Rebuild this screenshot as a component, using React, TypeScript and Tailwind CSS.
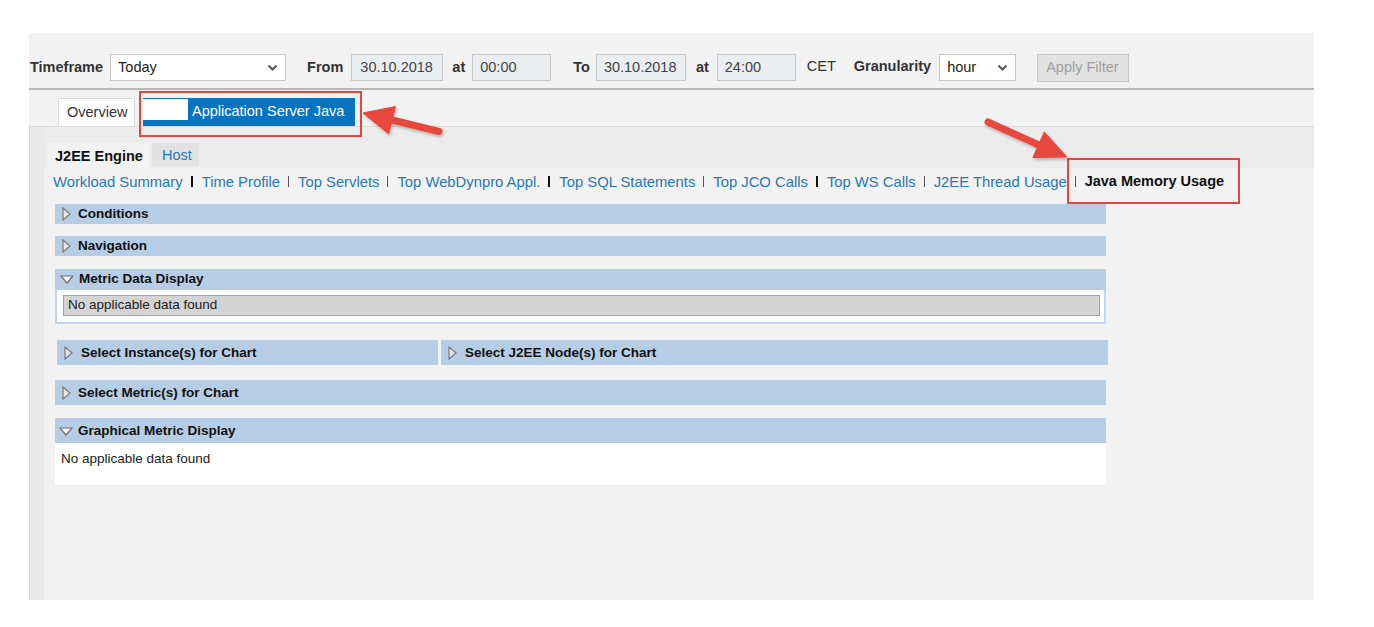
import React from "react";

const Chevron = () => (
  <svg width="11" height="8" viewBox="0 0 11 8">
    <path d="M1.5 1.5 L5.5 5.5 L9.5 1.5" stroke="#555" strokeWidth="2" fill="none" />
  </svg>
);

const TriRight = () => (
  <svg width="9" height="14" viewBox="0 0 9 14" className="shrink-0">
    <polygon points="1,1 8,7 1,13" fill="#e6e6e6" stroke="#7a7a7a" strokeWidth="1.2" />
  </svg>
);

const TriDown = () => (
  <svg width="14" height="9" viewBox="0 0 14 9" className="shrink-0">
    <polygon points="1,1 13,1 7,8" fill="#ffffff" stroke="#6e6e6e" strokeWidth="1.2" />
  </svg>
);

const links = [
  "Workload Summary",
  "Time Profile",
  "Top Servlets",
  "Top WebDynpro Appl.",
  "Top SQL Statements",
  "Top JCO Calls",
  "Top WS Calls",
  "J2EE Thread Usage",
];
const thick = [0, 3, 5];

export default function App() {
  return (
    <div className="relative w-[1374px] h-[627px] bg-white pt-[33px] pl-[29px] font-['Liberation_Sans',Arial,sans-serif] overflow-hidden">
      <div className="w-[1285px] h-[567px] bg-[#f2f2f2] flex flex-col">
        {/* Filter row */}
        <div className="h-[57px] shrink-0 flex items-start pt-[21px] pl-[1px] border-b-2 border-[#b8b8b8] text-[14.5px] text-[#333]">
          <span className="h-[27px] flex items-center font-bold">Timeframe</span>
          <div className="ml-[7px] w-[176px] h-[27px] bg-white border border-[#c6c6c6] flex items-center justify-between pl-[7px] pr-[7px] text-[#222]">
            <span>Today</span>
            <Chevron />
          </div>
          <span className="ml-[21px] h-[27px] flex items-center font-bold">From</span>
          <div className="ml-[8px] w-[92px] h-[27px] bg-[#ebeef1] border border-[#c8c8c8] flex items-center pl-[8px] text-[#444]">30.10.2018</div>
          <span className="ml-[9px] h-[27px] flex items-center font-bold">at</span>
          <div className="ml-[7px] w-[79px] h-[27px] bg-[#ebeef1] border border-[#c8c8c8] flex items-center pl-[7px] text-[#444]">00:00</div>
          <span className="ml-[22px] h-[27px] flex items-center font-bold">To</span>
          <div className="ml-[6px] w-[90px] h-[27px] bg-[#ebeef1] border border-[#c8c8c8] flex items-center pl-[7px] text-[#444]">30.10.2018</div>
          <span className="ml-[10px] h-[27px] flex items-center font-bold">at</span>
          <div className="ml-[8px] w-[79px] h-[27px] bg-[#ebeef1] border border-[#c8c8c8] flex items-center pl-[7px] text-[#444]">24:00</div>
          <span className="ml-[11px] h-[25px] flex items-center">CET</span>
          <span className="ml-[18px] h-[25px] flex items-center font-bold">Granularity</span>
          <div className="ml-[8px] w-[77px] h-[27px] bg-white border border-[#c6c6c6] flex items-center justify-between pl-[7px] pr-[7px] text-[#222]">
            <span>hour</span>
            <Chevron />
          </div>
          <div className="ml-[21px] w-[92px] h-[28px] bg-[#e2e2e2] border border-[#c6c6c6] flex items-center pl-[8px] text-[#a0a0a0]">Apply Filter</div>
        </div>

        {/* Tabs row */}
        <div className="h-[37px] shrink-0 flex items-start pt-[8px] pl-[29px] border-b border-[#dadada] text-[14.5px]">
          <div className="w-[77px] h-[28px] bg-white border border-b-0 border-[#dcdcdc] flex items-center pl-[8px] text-[#333]">Overview</div>
          <div className="ml-[8px] w-[212px] h-[28px] bg-[#0874c0] flex items-start">
            <div className="w-[45px] h-[21px] bg-white mt-[1px]" />
            <span className="pl-[4px] pt-[5px] text-white leading-[17px]">Application Server Java</span>
          </div>
        </div>

        {/* Body */}
        <div className="flex-1 flex">
          <div className="w-[15px] shrink-0 bg-[#e9e9e9] border-l border-[#cecece]" />
          <div className="flex-1 flex flex-col">
            {/* Sub tabs */}
            <div className="h-[41px] shrink-0 bg-[#ececec] flex items-start pt-[16px] pl-[3px] text-[14.5px]">
              <div className="w-[103px] h-[25px] bg-[#f2f2f2] flex items-center pt-[2px] pl-[8px] font-bold text-[#111]">J2EE Engine</div>
              <div className="ml-[2px] w-[47px] h-[23px] bg-[#e2e2e2] flex items-center pt-[2px] pl-[10px] text-[#2878b4]">Host</div>
            </div>

            {/* Links */}
            <div className="h-[27px] shrink-0 flex items-center pt-[1px] pl-[9px] text-[14.8px] text-[#2878b4]">
              {links.map((l, i) => (
                <React.Fragment key={l}>
                  <span>{l}</span>
                  <span
                    className={
                      thick.includes(i)
                        ? "ml-[8px] mr-[9px] w-[2px] h-[11px] bg-[#111] -mt-[2px]"
                        : "ml-[8px] mr-[9px] w-px h-[11px] bg-[#555] -mt-[2px]"
                    }
                  />
                </React.Fragment>
              ))}
              <span className="font-bold text-[#111] text-[14.5px]">Java Memory Usage</span>
            </div>

            {/* Panels */}
            <div className="pl-[11px] flex flex-col text-[13.5px] text-[#111]">
              <div className="mt-[9px] w-[1051px] h-[20px] bg-[#b7cde5] flex items-center pl-[7px] gap-[7px] font-bold">
                <TriRight />
                <span>Conditions</span>
              </div>
              <div className="mt-[12px] w-[1051px] h-[20px] bg-[#b7cde5] flex items-center pl-[7px] gap-[7px] font-bold">
                <TriRight />
                <span>Navigation</span>
              </div>
              <div className="mt-[13px] w-[1051px]">
                <div className="h-[21px] bg-[#b7cde5] flex items-center pl-[5px] gap-[5px] font-bold">
                  <TriDown />
                  <span>Metric Data Display</span>
                </div>
                <div className="h-[34px] bg-white border-x-2 border-b-2 border-[#c3d6ea] pt-[5px] pl-[6px] pr-[4px]">
                  <div className="h-[21px] bg-[#d4d4d4] border border-[#a3a3a3] flex items-center pl-[4px] text-[#222]">No applicable data found</div>
                </div>
              </div>
              <div className="mt-[16px] flex">
                <div className="ml-[2px] w-[381px] h-[25px] bg-[#b7cde5] flex items-center pt-[1px] pl-[7px] gap-[8px] font-bold">
                  <TriRight />
                  <span>Select Instance(s) for Chart</span>
                </div>
                <div className="ml-[3px] w-[667px] h-[25px] bg-[#b7cde5] flex items-center pt-[1px] pl-[7px] gap-[8px] font-bold">
                  <TriRight />
                  <span>Select J2EE Node(s) for Chart</span>
                </div>
              </div>
              <div className="mt-[15px] w-[1051px] h-[25px] bg-[#b7cde5] flex items-center pt-[1px] pl-[7px] gap-[7px] font-bold">
                <TriRight />
                <span>Select Metric(s) for Chart</span>
              </div>
              <div className="mt-[13px] w-[1051px]">
                <div className="h-[25px] bg-[#b7cde5] flex items-center pt-[1px] pl-[4px] gap-[5px] font-bold">
                  <TriDown />
                  <span>Graphical Metric Display</span>
                </div>
                <div className="h-[42px] bg-white pt-[6px] pl-[6px] text-[#222]">No applicable data found</div>
              </div>
            </div>
          </div>
        </div>
      </div>

      {/* Annotation overlay */}
      <svg className="absolute inset-0 pointer-events-none" width="1374" height="627" viewBox="0 0 1374 627">
        <defs>
          <filter id="sh" x="-20%" y="-20%" width="140%" height="140%">
            <feDropShadow dx="1" dy="2" stdDeviation="1.5" floodColor="#000" floodOpacity="0.25" />
          </filter>
        </defs>
        <rect x="140" y="92" width="221" height="44" fill="none" stroke="#e0473f" strokeWidth="2" />
        <rect x="1068" y="159" width="171" height="44" fill="none" stroke="#e0473f" strokeWidth="2" />
        <g filter="url(#sh)" fill="#e8463e" stroke="#e8463e">
          <line x1="439" y1="131.5" x2="388" y2="119" strokeWidth="7" strokeLinecap="round" />
          <polygon points="363,113 395.5,106.5 388.7,133.8" strokeWidth="1" strokeLinejoin="round" />
          <line x1="988" y1="122" x2="1040" y2="145.5" strokeWidth="7" strokeLinecap="round" />
          <polygon points="1067,157 1044.3,131.9 1032.9,157.5" strokeWidth="1" strokeLinejoin="round" />
        </g>
      </svg>
    </div>
  );
}
